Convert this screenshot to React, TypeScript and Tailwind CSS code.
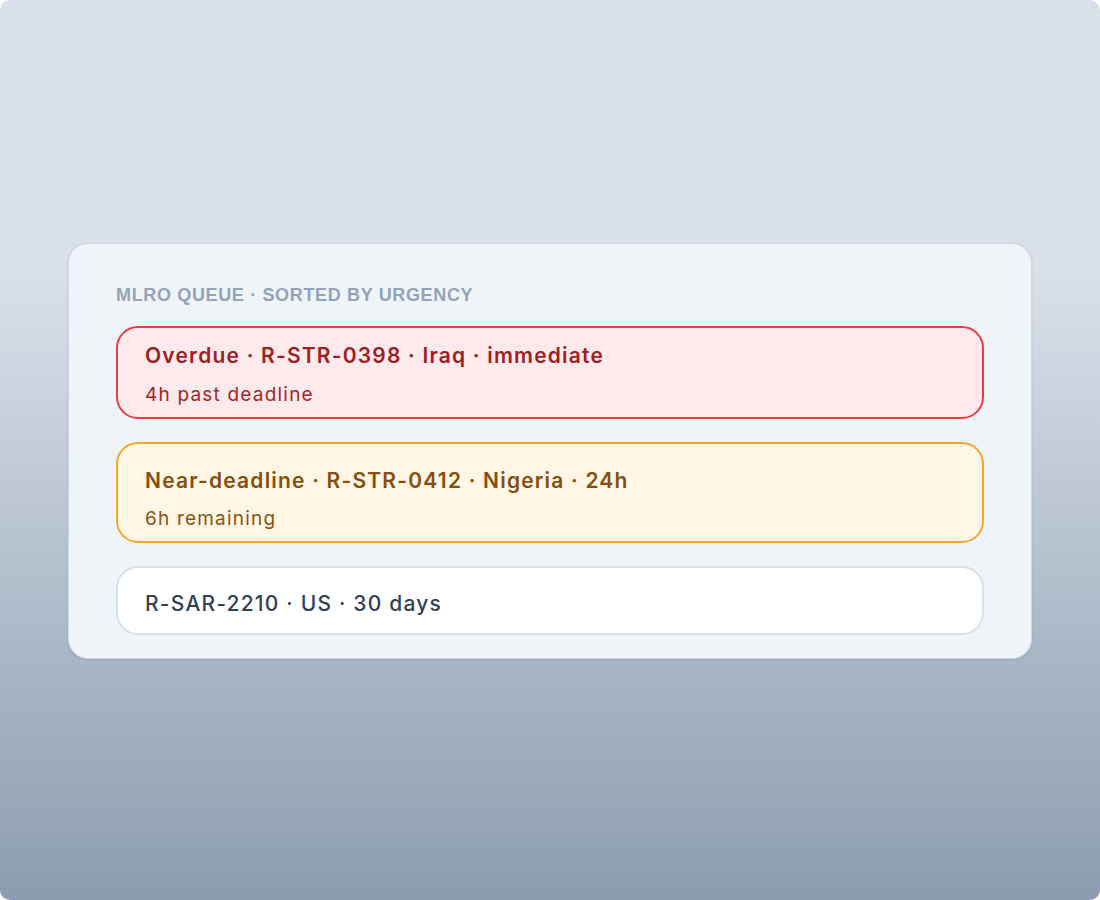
import React from "react";

export default function App() {
  return (
    <div className="w-[1100px] h-[900px] bg-white">
      <div className="w-[1100px] h-[900px] rounded-[10px] bg-[linear-gradient(180deg,#d9e0e9_0%,#d9e0e9_30%,#8c9cb0_100%)] flex flex-col pt-[243px] px-[68px]">
        <div className="w-[964px] rounded-[20px] border border-[#d0d9e3] bg-[#eff4f9] px-[47px] pt-[40px] pb-[23px] shadow-[0_1px_2px_rgba(100,116,139,0.25)]">
          <div className="font-['Liberation_Sans',Arial,sans-serif] font-bold text-[18px] leading-[22px] tracking-[0.65px] text-[#94a3b8] uppercase">
            MLRO QUEUE · SORTED BY URGENCY
          </div>
          <div className="mt-[20px] flex flex-col gap-[23px] font-['Inter',sans-serif]">
            <div className="rounded-[22px] border-2 border-[#ef3a45] bg-[#fee9ec] px-[27px] pt-[14px] pb-[9px]">
              <div className="text-[21px] leading-[28px] font-semibold tracking-[1.2px] text-[#9b1f24]">
                Overdue · R-STR-0398 · Iraq · immediate
              </div>
              <div className="mt-[12px] text-[19px] leading-[26px] tracking-[1.2px] text-[#a1262b]">4h past deadline</div>
            </div>
            <div className="rounded-[22px] border-2 border-[#f5a62a] bg-[#fff6e5] px-[27px] pt-[23px] pb-[9px]">
              <div className="text-[21px] leading-[28px] font-semibold tracking-[1.2px] text-[#85500f]">
                Near-deadline · R-STR-0412 · Nigeria · 24h
              </div>
              <div className="mt-[11px] text-[19px] leading-[26px] tracking-[1.2px] text-[#8a5214]">6h remaining</div>
            </div>
            <div className="rounded-[22px] border-2 border-[#d8e0ea] bg-white px-[27px] pt-[22px] pb-[15px]">
              <div className="text-[21px] leading-[28px] font-medium tracking-[1.2px] text-[#334155]">
                R-SAR-2210 · US · 30 days
              </div>
            </div>
          </div>
        </div>
      </div>
    </div>
  );
}
